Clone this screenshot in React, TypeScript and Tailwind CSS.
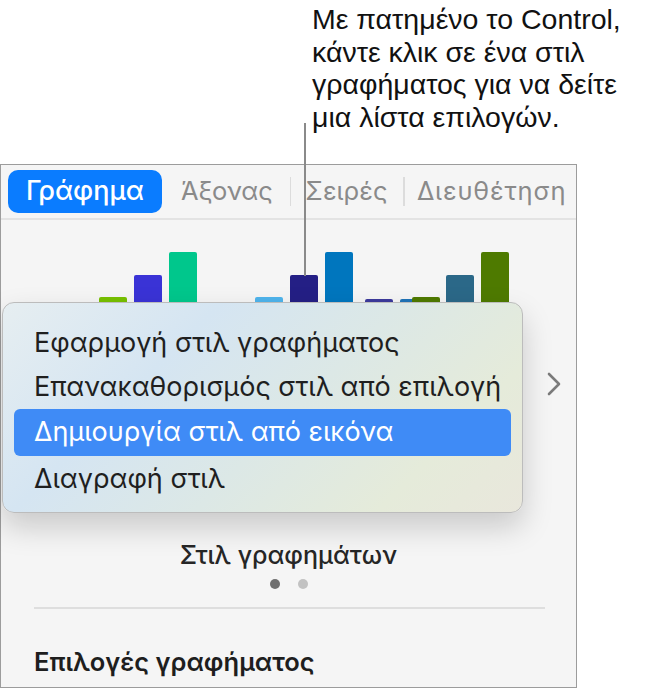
import React from "react";

const bars = [
  { x: 99, top: 298, c: "#77c000" },
  { x: 134, top: 276, c: "#3a33d6" },
  { x: 169, top: 253, c: "#00c78c" },
  { x: 255, top: 298, c: "#4fb4ec" },
  { x: 290, top: 276, c: "#241f85" },
  { x: 325, top: 253, c: "#0076be" },
  { x: 365, top: 300, c: "#3c3a9c" },
  { x: 400, top: 300, c: "#1f73b8" },
  { x: 412, top: 298, c: "#4f7a00" },
  { x: 446, top: 276, c: "#2b6888" },
  { x: 481, top: 253, c: "#4e7a00" },
];

export default function App() {
  return (
    <div className="relative w-[651px] h-[689px] bg-white overflow-hidden" style={{ fontFamily: "Inter, 'Noto Sans', sans-serif" }}>
      {/* callout */}
      <div className="h-[164px] pl-[312px] pt-[3px]">
        <p className="text-[28.5px] leading-[32.5px] text-[#111]" style={{ fontFamily: "'Liberation Sans', Arial, sans-serif" }}>
          Με πατημένο το Control,
          <br />
          κάντε κλικ σε ένα στιλ
          <br />
          γραφήματος για να δείτε
          <br />
          μια λίστα επιλογών.
        </p>
      </div>

      {/* panel */}
      <div className="relative w-[577px] h-[524px] border-[1.5px] border-[#9c9c9c] bg-[#f5f5f5] flex flex-col">
        {/* tabs */}
        <div className="h-[55px] shrink-0 border-b-2 border-[#e3e3e3] flex items-start pt-[5px] pl-[7px]">
          <div className="h-[43px] w-[154px] shrink-0 rounded-[10px] bg-[#0a7cff] flex items-center justify-center text-white text-[27px] font-medium">
            Γράφημα
          </div>
          <div className="h-[43px] flex items-center text-[#8a8a8a] text-[25.5px] whitespace-nowrap">
            <span className="ml-[19px]">Άξονας</span>
            <span className="ml-[17px] w-[1.5px] h-[29px] bg-[#dcdcdc]" />
            <span className="ml-[14px]">Σειρές</span>
            <span className="ml-[16px] w-[1.5px] h-[29px] bg-[#dcdcdc]" />
            <span className="ml-[12px] tracking-[0.8px]">Διευθέτηση</span>
          </div>
        </div>

        {/* chart area */}
        <div className="h-[320px] shrink-0 relative">
          <svg width="576" height="320" className="block">
            {bars.map((b, i) => (
              <rect key={i} x={b.x - 1} y={b.top - 221} width={28} height={120} rx={2} fill={b.c} />
            ))}
          </svg>
          <svg width="16" height="24" viewBox="0 0 16 24" className="absolute left-[545px] top-[152px]">
            <polyline points="3,2 13,12 3,22" fill="none" stroke="#7b7b7b" strokeWidth="2.6" strokeLinecap="round" strokeLinejoin="round" />
          </svg>
        </div>

        <div className="text-center text-[25px] leading-[30px] font-medium text-[#262626]">
          Στιλ γραφημάτων
        </div>
        <div className="flex justify-center gap-[18px] mt-[9px]">
          <span className="w-[10px] h-[10px] rounded-full bg-[#707070]" />
          <span className="w-[10px] h-[10px] rounded-full bg-[#c2c2c2]" />
        </div>
        <div className="ml-[33px] mr-[31px] mt-[18px] h-[2px] bg-[#dedede]" />
        <div className="pl-[33px] mt-[38px] text-[25.5px] leading-[30px] font-semibold text-[#1e1e1e]">
          Επιλογές γραφήματος
        </div>
      </div>

      {/* context menu */}
      <div
        className="absolute left-[2px] top-[302px] w-[521px] h-[211px] rounded-[12px] border border-[#bcbcbc] pt-[18px] shadow-[0_14px_30px_rgba(0,0,0,0.18)] bg-[linear-gradient(135deg,#e6eef1_0%,#d5e5f2_30%,#dce8e6_55%,#e5ebda_80%,#e9e7dc_100%)]"
      >
        <div className="h-[44px] flex items-center pl-[31px] text-[27px] text-[#1f1f1f] whitespace-nowrap">Εφαρμογή στιλ γραφήματος</div>
        <div className="h-[44px] flex items-center pl-[31px] text-[27px] text-[#1f1f1f] whitespace-nowrap">Επανακαθορισμός στιλ από επιλογή</div>
        <div className="h-[47px] mx-[11px] rounded-[6px] bg-[#3f8bf6] flex items-center pl-[20px] text-[27px] text-white whitespace-nowrap">
          Δημιουργία στιλ από εικόνα
        </div>
        <div className="h-[46px] flex items-center pl-[31px] text-[27px] text-[#1f1f1f] whitespace-nowrap">Διαγραφή στιλ</div>
      </div>

      {/* callout line */}
      <div className="absolute left-[304px] top-[123px] w-[2px] h-[153px] bg-[#8a8a8a]" />
    </div>
  );
}
